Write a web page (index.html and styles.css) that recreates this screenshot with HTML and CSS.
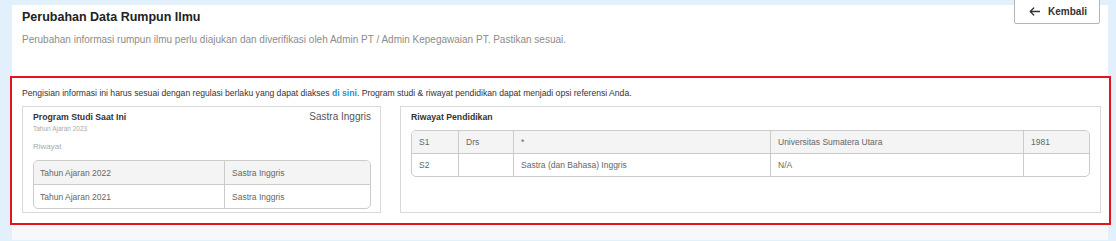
FILE: index.html
```html
<!DOCTYPE html>
<html lang="id">
<head>
<meta charset="utf-8">
<title>Perubahan Data Rumpun Ilmu</title>
<link rel="stylesheet" href="styles.css">
</head>
<body>
<div class="page">
  <div class="card">
    <div class="header">
      <div class="heading">
        <h1 class="title">Perubahan Data Rumpun Ilmu</h1>
        <p class="subtitle">Perubahan informasi rumpun ilmu perlu diajukan dan diverifikasi oleh Admin PT / Admin Kepegawaian PT. Pastikan sesuai.</p>
      </div>
      <button class="back-btn" type="button">
        <svg class="arrow" width="11" height="9" viewBox="0 0 11 9" aria-hidden="true"><path d="M10.5 4.5H1.2M4.7 1 1.2 4.5 4.7 8" fill="none" stroke="#333" stroke-width="1.3" stroke-linecap="round" stroke-linejoin="round"/></svg>
        <span>Kembali</span>
      </button>
    </div>

    <div class="highlight">
      <p class="notice">Pengisian informasi ini harus sesuai dengan regulasi berlaku yang dapat diakses <a class="link" href="#">di sini</a>. Program studi &amp; riwayat pendidikan dapat menjadi opsi referensi Anda.</p>
      <div class="panels">
        <div class="panel">
          <div class="panel-head">
            <span class="panel-title">Program Studi Saat Ini</span>
            <span class="panel-value">Sastra Inggris</span>
          </div>
          <div class="year-note">Tahun Ajaran 2023</div>
          <div class="history-label">Riwayat</div>
          <div class="table table-left">
            <div class="row shaded"><div class="cell">Tahun Ajaran 2022</div><div class="cell">Sastra Inggris</div></div>
            <div class="row"><div class="cell">Tahun Ajaran 2021</div><div class="cell">Sastra Inggris</div></div>
          </div>
        </div>
        <div class="panel">
          <div class="panel-head">
            <span class="panel-title">Riwayat Pendidikan</span>
          </div>
          <div class="table table-right">
            <div class="row shaded"><div class="cell">S1</div><div class="cell">Drs</div><div class="cell">*</div><div class="cell">Universitas Sumatera Utara</div><div class="cell">1981</div></div>
            <div class="row"><div class="cell">S2</div><div class="cell"></div><div class="cell">Sastra (dan Bahasa) Inggris</div><div class="cell">N/A</div><div class="cell"></div></div>
          </div>
        </div>
      </div>
    </div>

    <div class="next-section"></div>
  </div>
</div>
</body>
</html>
```

FILE: styles.css
```css
* { box-sizing: border-box; }

html, body {
  margin: 0;
  padding: 0;
  height: 100%;
  overflow: hidden;
}

body {
  background: #e2f0fb;
  font-family: "Liberation Sans", Arial, sans-serif;
  color: #333;
}

.page {
  padding: 5px 8px 0 12px;
}

.card {
  background: #fff;
}

.header {
  display: flex;
  justify-content: space-between;
  align-items: flex-start;
  padding: 5px 8px 30px 10px;
}

.title {
  margin: 0;
  font-size: 12.5px;
  line-height: 15px;
  font-weight: 700;
  color: #222;
}

.subtitle {
  margin: 9px 0 0;
  font-size: 10px;
  line-height: 12px;
  color: #8c8c8c;
}

.back-btn {
  margin-top: -12px;
  width: 86px;
  height: 26px;
  display: flex;
  align-items: center;
  justify-content: center;
  gap: 8px;
  padding: 0 0 0 2px;
  background: #fff;
  border: 1px solid #b4b4b4;
  border-radius: 2px;
  font-family: "Liberation Sans", Arial, sans-serif;
  font-size: 10px;
  font-weight: 700;
  color: #333;
}

.arrow { display: block; }

.highlight {
  margin: 0 -3px 0 -2px;
  border: 2px solid #e3141f;
  padding: 10px 8px 10px 10px;
  background: #fff;
}

.notice {
  margin: 0;
  font-size: 8.6px;
  line-height: 10px;
  color: #333;
}

.link {
  color: #1b8fe0;
  font-weight: 700;
  text-decoration: none;
}

.panels {
  margin-top: 8px;
  display: grid;
  grid-template-columns: 359px 1fr;
  gap: 19px;
}

.panel {
  border: 1px solid #d9d9d9;
  padding: 4px 9px 3px 10px;
}

.panel-head {
  display: flex;
  justify-content: space-between;
  align-items: baseline;
}

.panel-title {
  font-size: 8.7px;
  line-height: 12px;
  font-weight: 700;
  color: #333;
}

.panel-value {
  font-size: 10px;
  line-height: 12px;
  color: #555;
}

.year-note {
  margin-top: 2px;
  font-size: 6.5px;
  line-height: 8px;
  color: #aaa;
}

.history-label {
  margin-top: 9px;
  font-size: 8px;
  line-height: 10px;
  color: #aaa;
}

.table {
  border: 1px solid #cbcbcb;
  border-radius: 5px;
  overflow: hidden;
  font-size: 8.5px;
  color: #666;
}

.table-left { margin-top: 8px; }
.table-right { margin-top: 7px; margin-right: 1px; }

.row {
  display: grid;
  border-bottom: 1px solid #cbcbcb;
}
.row:last-child { border-bottom: none; }
.row.shaded { background: #f4f4f4; }

.table-left .row {
  grid-template-columns: 190px 1fr;
  height: 24px;
}
.table-left .row:last-child { height: 23px; }

.table-right .row {
  grid-template-columns: 46px 55px 257px 253px 1fr;
  height: 23px;
}
.table-right .row:last-child { height: 22px; }

.cell {
  display: flex;
  align-items: center;
  padding-left: 7px;
  border-left: 1px solid #cbcbcb;
  white-space: nowrap;
}
.cell:first-child { border-left: none; }
.table-left .cell:first-child { padding-left: 6px; }

.next-section {
  height: 15px;
  background: #f6f8fb;
}
```
